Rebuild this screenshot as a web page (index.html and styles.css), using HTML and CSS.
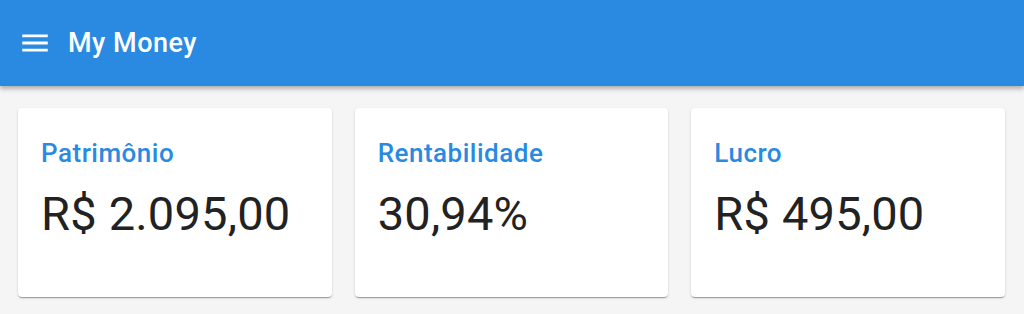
FILE: index.html
```html
<!DOCTYPE html>
<html lang="pt-BR">
<head>
    <meta charset="UTF-8">
    <meta name="viewport" content="width=device-width, initial-scale=1.0">
    <title>My Money</title>
    <link rel="stylesheet" href="styles.css">
</head>
<body>
    <header class="toolbar">
        <svg class="menu-icon" viewBox="0 0 24 24" width="34" height="34">
            <path fill="#fff" d="M3 18h18v-2H3v2zm0-5h18v-2H3v2zm0-7v2h18V6H3z"/>
        </svg>
        <h1 class="toolbar-title">My Money</h1>
    </header>

    <main class="dashboard">
        <div class="card">
            <div class="card-title">Patrimônio</div>
            <div class="card-value">R$ 2.095,00</div>
        </div>
        <div class="card">
            <div class="card-title">Rentabilidade</div>
            <div class="card-value">30,94%</div>
        </div>
        <div class="card">
            <div class="card-title">Lucro</div>
            <div class="card-value">R$ 495,00</div>
        </div>
    </main>
</body>
</html>
```

FILE: styles.css
```css
* {
    margin: 0;
    padding: 0;
    box-sizing: border-box;
}

body {
    font-family: Roboto, 'Liberation Sans', sans-serif;
    background: #f5f5f5;
    min-height: 100vh;
}

.toolbar {
    height: 86px;
    background: #2a89e0;
    display: flex;
    align-items: center;
    padding-left: 18px;
    box-shadow: 0 2px 4px rgba(0, 0, 0, 0.2), 0 4px 5px rgba(0, 0, 0, 0.12);
    position: relative;
}

.menu-icon {
    display: block;
}

.toolbar-title {
    color: #fff;
    font-size: 27px;
    font-weight: 500;
    letter-spacing: 0.5px;
    margin-left: 16px;
}

.dashboard {
    display: grid;
    grid-template-columns: repeat(3, 1fr);
    gap: 23px;
    padding: 22px 19px 0 18px;
}

.card {
    background: #fff;
    border-radius: 4px;
    height: 189px;
    padding: 30px 23px 0;
    box-shadow: 0 2px 1px -1px rgba(0, 0, 0, 0.2), 0 1px 1px rgba(0, 0, 0, 0.14), 0 1px 3px rgba(0, 0, 0, 0.12);
}

.card-title {
    color: #2a8ae2;
    font-size: 26px;
    font-weight: 500;
    letter-spacing: 0.5px;
    line-height: 30px;
}

.card-value {
    color: #222;
    font-size: 47px;
    letter-spacing: 0.2px;
    line-height: 55px;
    margin-top: 18px;
}
```
